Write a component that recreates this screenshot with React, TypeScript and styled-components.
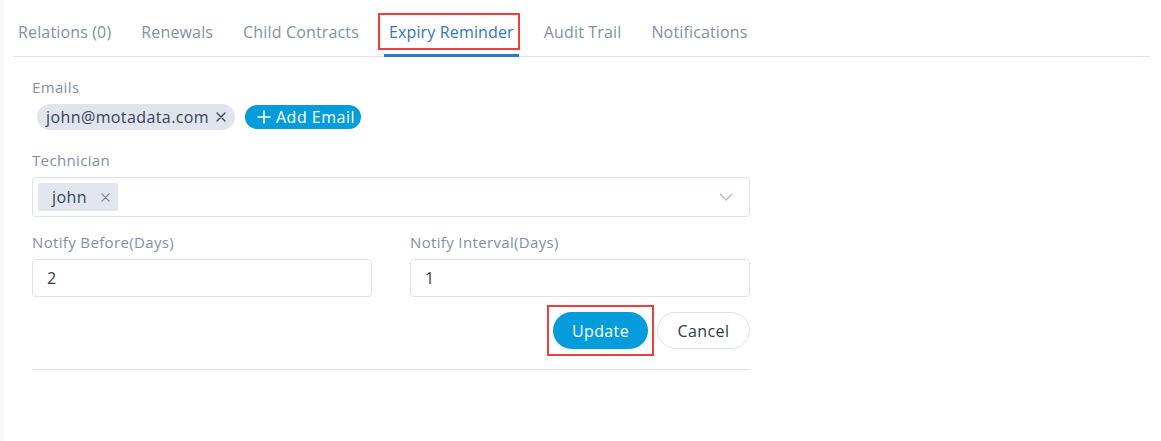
import React from "react";
import styled, { createGlobalStyle } from "styled-components";

const Global = createGlobalStyle`
  html, body { margin: 0; padding: 0; background: #ffffff; }
  body { font-family: "Open Sans", "Noto Sans", sans-serif; -webkit-font-smoothing: antialiased; }
  * { box-sizing: border-box; }
`;

const Page = styled.div`
  width: 1161px;
  height: 441px;
  border-left: 4px solid #f8f8f9;
  padding: 0 11px 0 9px;
  background: #ffffff;
`;

const TabBar = styled.div`
  display: flex;
  align-items: stretch;
  gap: 20px;
  height: 57px;
  border-bottom: 1px solid #dfe3ea;
`;

const Tab = styled.div<{ $active?: boolean }>`
  position: relative;
  display: flex;
  align-items: center;
  padding: 9px 5px 0;
  font-size: 16px;
  letter-spacing: 0.15px;
  color: ${(p) => (p.$active ? "#2f77c0" : "#8191a9")};
  border-bottom: 3px solid ${(p) => (p.$active ? "#2f77c0" : "transparent")};
  margin-bottom: -1px;
  white-space: nowrap;
`;

const Highlight = styled.span`
  position: absolute;
  left: -6px;
  right: -1px;
  top: 13px;
  height: 37px;
  border: 2px solid #ee3f3f;
  pointer-events: none;
`;

const Form = styled.div`
  width: 737px;
  padding: 20px 0 0 19px;
  display: flex;
  flex-direction: column;
`;

const Label = styled.div<{ $mt?: number }>`
  font-size: 15px;
  letter-spacing: 0.35px;
  line-height: 20px;
  color: #7f8fa9;
  margin-top: ${(p) => p.$mt ?? 0}px;
  margin-bottom: 7px;
`;

const ChipRow = styled.div`
  display: flex;
  align-items: center;
  gap: 10px;
  height: 26px;
  padding-left: 5px;
`;

const EmailChip = styled.div`
  display: flex;
  align-items: center;
  justify-content: space-between;
  height: 26px;
  width: 198px;
  padding: 0 9px 0 9px;
  border-radius: 13px;
  background: #e0e5ed;
  color: #364456;
  font-size: 16px;
  letter-spacing: 0.4px;
`;

const AddButton = styled.button`
  display: flex;
  align-items: center;
  gap: 5px;
  height: 24px;
  width: 116px;
  padding: 0 0 0 12px;
  border: none;
  border-radius: 12px;
  background: #049cdb;
  color: #ffffff;
  font-family: inherit;
  font-size: 16px;
  letter-spacing: 0.5px;
`;

const Select = styled.div`
  display: flex;
  align-items: center;
  height: 40px;
  padding: 0 16px 0 5px;
  border: 1px solid #dde3ec;
  border-radius: 4px;
`;

const Tag = styled.div`
  display: flex;
  align-items: center;
  gap: 14px;
  height: 28px;
  width: 80px;
  padding: 0 0 0 14px;
  background: #e1e6ee;
  border-radius: 2px;
  color: #364456;
  font-size: 16px;
  letter-spacing: 0.4px;
`;

const Spacer = styled.div`
  flex: 1;
`;

const Grid = styled.div`
  display: grid;
  grid-template-columns: 340px 340px;
  column-gap: 38px;
`;

const Field = styled.div`
  display: flex;
  flex-direction: column;
`;

const Input = styled.div`
  height: 38px;
  display: flex;
  align-items: center;
  padding: 0 14px;
  border: 1px solid #dde3ec;
  border-radius: 4px;
  color: #2f3b4b;
  font-size: 16px;
`;

const Actions = styled.div`
  display: flex;
  justify-content: flex-end;
  align-items: center;
  gap: 9px;
  margin-top: 15px;
`;

const Boxed = styled.div`
  position: relative;
  display: flex;
`;

const PrimaryButton = styled.button`
  height: 37px;
  width: 95px;
  border: none;
  border-radius: 19px;
  background: #049cdb;
  color: #ffffff;
  font-family: inherit;
  font-size: 16px;
  letter-spacing: 0.4px;
`;

const SecondaryButton = styled.button`
  height: 37px;
  width: 93px;
  border: 1px solid #dde3ec;
  border-radius: 19px;
  background: #ffffff;
  color: #2f3b4b;
  font-family: inherit;
  font-size: 16px;
  letter-spacing: 0.4px;
`;

const ButtonHighlight = styled.span`
  position: absolute;
  left: -6px;
  right: -6px;
  top: -7px;
  bottom: -7px;
  border: 2px solid #ee3f3f;
  pointer-events: none;
`;

const Divider = styled.div`
  height: 1px;
  background: #dcdfea;
  margin-top: 20px;
`;

const Close = ({ color, size = 10 }: { color: string; size?: number }) => (
  <svg width={size} height={size} viewBox="0 0 10 10">
    <path d="M1 1L9 9M9 1L1 9" stroke={color} strokeWidth="1.4" strokeLinecap="round" />
  </svg>
);

const tabs = ["Relations (0)", "Renewals", "Child Contracts", "Expiry Reminder", "Audit Trail", "Notifications"];

export default function App() {
  return (
    <>
      <Global />
      <Page>
        <TabBar>
          {tabs.map((t) => (
            <Tab key={t} $active={t === "Expiry Reminder"}>
              {t}
              {t === "Expiry Reminder" && <Highlight />}
            </Tab>
          ))}
        </TabBar>
        <Form>
          <Label>Emails</Label>
          <ChipRow>
            <EmailChip>
              john@motadata.com
              <Close color="#3b4656" size={10} />
            </EmailChip>
            <AddButton>
              <svg width="14" height="14" viewBox="0 0 14 14">
                <path d="M7 1V13M1 7H13" stroke="#fff" strokeWidth="1.6" strokeLinecap="round" />
              </svg>
              Add Email
            </AddButton>
          </ChipRow>
          <Label $mt={20}>Technician</Label>
          <Select>
            <Tag>
              john
              <Close color="#7d8797" size={9} />
            </Tag>
            <Spacer />
            <svg width="14" height="8" viewBox="0 0 14 8">
              <path d="M1 1L7 7L13 1" stroke="#a9b6c8" strokeWidth="1.2" fill="none" />
            </svg>
          </Select>
          <Grid>
            <Field>
              <Label $mt={15}>Notify Before(Days)</Label>
              <Input>2</Input>
            </Field>
            <Field>
              <Label $mt={15}>Notify Interval(Days)</Label>
              <Input>1</Input>
            </Field>
          </Grid>
          <Actions>
            <Boxed>
              <PrimaryButton>Update</PrimaryButton>
              <ButtonHighlight />
            </Boxed>
            <SecondaryButton>Cancel</SecondaryButton>
          </Actions>
          <Divider />
        </Form>
      </Page>
    </>
  );
}
